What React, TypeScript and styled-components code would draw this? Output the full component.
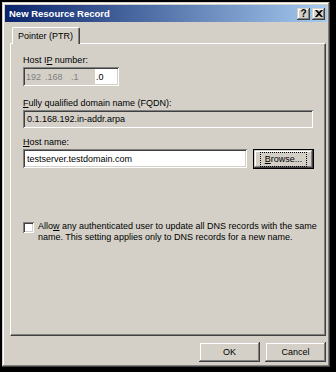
import React from "react";
import styled, { createGlobalStyle } from "styled-components";

const colors = {
  face: "#d4d0c8",
  shadow: "#808080",
  dark: "#404040",
  light: "#ffffff",
  text: "#000000",
  grayText: "#808080",
};

const GlobalStyle = createGlobalStyle`
  html, body {
    margin: 0;
    padding: 0;
    background: #000;
    width: 336px;
    height: 372px;
    overflow: hidden;
  }
  body {
    font-family: Tahoma, "Liberation Sans", Arial, sans-serif;
    font-size: 9px;
    color: ${colors.text};
  }
`;

const raised = `
  box-shadow: inset -1px -1px ${colors.dark}, inset 1px 1px ${colors.face},
    inset -2px -2px ${colors.shadow}, inset 2px 2px ${colors.light};
`;

const sunken = `
  box-shadow: inset 1px 1px ${colors.shadow}, inset -1px -1px ${colors.light},
    inset 2px 2px ${colors.dark}, inset -2px -2px ${colors.face};
`;

const Dialog = styled.div`
  margin: 2px 0 0 2px;
  width: 328px;
  height: 365px;
  box-sizing: border-box;
  padding: 3px;
  background: ${colors.face};
  ${raised}
  display: flex;
  flex-direction: column;
`;

const TitleBar = styled.div`
  height: 17px;
  display: flex;
  align-items: center;
  padding: 0 2px 0 4px;
  background: linear-gradient(to right, #0a246a, #a6caf0);
  color: #fff;
  font-weight: bold;
  font-size: 9.5px;
`;

const Title = styled.span`
  flex: 1;
  line-height: 17px;
`;

const CaptionButtons = styled.div`
  display: flex;
  gap: 2px;
`;

const CaptionButton = styled.button`
  width: 13px;
  height: 12px;
  padding: 0;
  border: 0;
  background: ${colors.face};
  ${raised}
  display: flex;
  align-items: center;
  justify-content: center;
  font: bold 10px "Liberation Sans", Arial, sans-serif;
  color: #000;
  line-height: 1;
`;

const Body = styled.div`
  flex: 1;
  display: flex;
  flex-direction: column;
  padding: 5px 0 0 5px;
`;

const TabStrip = styled.div`
  display: flex;
  padding-left: 2px;
  position: relative;
  z-index: 1;
`;

const Tab = styled.div`
  height: 16px;
  padding: 0 6px 0 5px;
  display: flex;
  align-items: center;
  background: ${colors.face};
  border-left: 1px solid ${colors.light};
  border-top: 1px solid ${colors.light};
  border-right: 1px solid ${colors.dark};
  box-shadow: inset -1px 0 ${colors.shadow};
  border-radius: 2px 2px 0 0;
  margin-bottom: -1px;
`;

const Panel = styled.div`
  width: 316px;
  height: 293px;
  box-sizing: border-box;
  border-left: 1px solid ${colors.light};
  border-top: 1px solid ${colors.light};
  border-right: 1px solid ${colors.dark};
  border-bottom: 1px solid ${colors.dark};
  box-shadow: inset -1px -1px ${colors.shadow};
  padding: 10px 0 0 12px;
  display: flex;
  flex-direction: column;
`;

const Label = styled.div<{ $gap?: number }>`
  line-height: 12px;
  margin-top: ${(p) => p.$gap ?? 0}px;
  margin-bottom: 1px;
`;

const Key = styled.span`
  text-decoration: underline;
`;

const Field = styled.div<{ $w: number; $h?: number; $disabled?: boolean }>`
  width: ${(p) => p.$w}px;
  height: ${(p) => p.$h ?? 19}px;
  box-sizing: border-box;
  padding: 2px 4px;
  display: flex;
  align-items: center;
  background: ${(p) => (p.$disabled ? colors.face : colors.light)};
  ${sunken}
  white-space: pre;
`;

const IpField = styled.div`
  width: 96px;
  height: 19px;
  box-sizing: border-box;
  padding: 2px;
  display: flex;
  background: ${colors.face};
  ${sunken}
`;

const Octet = styled.span<{ $w: number; $active?: boolean }>`
  width: ${(p) => p.$w}px;
  padding-left: 1px;
  box-sizing: border-box;
  display: flex;
  align-items: center;
  white-space: pre;
  color: ${(p) => (p.$active ? colors.text : colors.grayText)};
  background: ${(p) => (p.$active ? colors.light : "transparent")};
`;

const Row = styled.div`
  display: flex;
  align-items: flex-start;
  gap: 6px;
`;

const Button = styled.button<{ $default?: boolean }>`
  width: 61px;
  height: 20px;
  padding: 0;
  border: ${(p) => (p.$default ? "1px solid #000" : "0")};
  box-sizing: border-box;
  background: ${colors.face};
  ${raised}
  font-family: Tahoma, "Liberation Sans", Arial, sans-serif;
  font-size: 9px;
  color: ${colors.text};
  display: flex;
  align-items: center;
  justify-content: center;
`;

const Focus = styled.span`
  padding: 1px 4px;
  outline: 1px dotted #000;
  line-height: 11px;
`;

const CheckRow = styled.label`
  display: flex;
  align-items: flex-start;
  gap: 4px;
  margin-top: 53px;
`;

const CheckBox = styled.span`
  flex: none;
  width: 11px;
  height: 11px;
  box-sizing: border-box;
  background: ${colors.light};
  ${sunken}
`;

const CheckText = styled.span`
  width: 280px;
  line-height: 11px;
  margin-top: -1px;
`;

const Footer = styled.div`
  display: flex;
  justify-content: flex-end;
  gap: 5px;
  padding-top: 6px;
  margin-right: 1px;
`;

const CloseGlyph = () => (
  <svg width="8" height="7" viewBox="0 0 8 7">
    <path d="M0 0h2l2 2 2-2h2L5 3.5 8 7H6L4 5 2 7H0l3-3.5z" fill="#000" />
  </svg>
);

const App: React.FC = () => {
  return (
    <>
      <GlobalStyle />
      <Dialog>
        <TitleBar>
          <Title>New Resource Record</Title>
          <CaptionButtons>
            <CaptionButton>?</CaptionButton>
            <CaptionButton>
              <CloseGlyph />
            </CaptionButton>
          </CaptionButtons>
        </TitleBar>
        <Body>
          <TabStrip>
            <Tab>Pointer (PTR)</Tab>
          </TabStrip>
          <Panel>
            <Label>
              Host I<Key>P</Key> number:
            </Label>
            <IpField>
              <Octet $w={19}>192</Octet>
              <Octet $w={26}>.168</Octet>
              <Octet $w={25}>.1</Octet>
              <Octet $w={22} $active>
                .0
              </Octet>
            </IpField>
            <Label $gap={11}>
              <Key>F</Key>ully qualified domain name (FQDN):
            </Label>
            <Field $w={290} $h={18} $disabled>
              0.1.168.192.in-addr.arpa
            </Field>
            <Label $gap={8}>
              <Key>H</Key>ost name:
            </Label>
            <Row>
              <Field $w={224}>testserver.testdomain.com</Field>
              <Button $default>
                <Focus>
                  <Key>B</Key>rowse...
                </Focus>
              </Button>
            </Row>
            <CheckRow>
              <CheckBox />
              <CheckText>
                Allo<Key>w</Key> any authenticated user to update all DNS records
                with the same name. This setting applies only to DNS records for
                a new name.
              </CheckText>
            </CheckRow>
          </Panel>
          <Footer>
            <Button>OK</Button>
            <Button>Cancel</Button>
          </Footer>
        </Body>
      </Dialog>
    </>
  );
};

export default App;
